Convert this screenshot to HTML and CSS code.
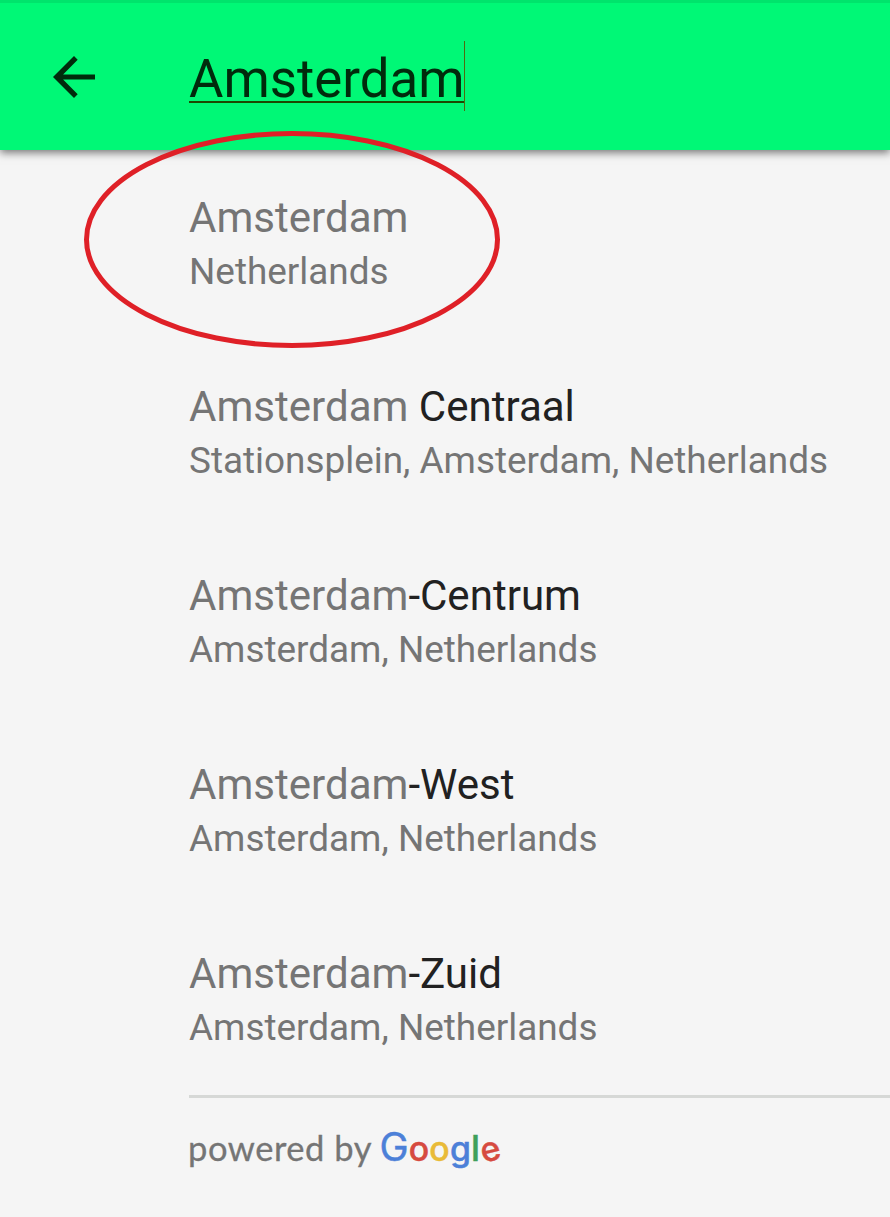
FILE: index.html
```html
<!DOCTYPE html>
<html lang="en">
<head>
<meta charset="utf-8">
<title>Place search</title>
<link rel="stylesheet" href="styles.css">
</head>
<body>
<header class="bar">
  <svg class="back" viewBox="0 0 42 42" width="42" height="42"><path d="M42 18.4H10.1L24.7 3.7L21 0L0 21L21 42L24.7 38.3L10.1 23.6H42Z"/></svg>
  <div class="query"><span class="typed">Amsterdam</span><span class="caret"></span></div>
</header>
<main class="results">
  <div class="place"><div class="name">Amsterdam</div><div class="area">Netherlands</div>
    <svg class="ring" viewBox="0 0 416 217" width="416" height="217"><ellipse cx="208" cy="108.5" rx="205.5" ry="106"/></svg></div>
  <div class="place"><div class="name">Amsterdam <b>Centraal</b></div><div class="area">Stationsplein, Amsterdam, Netherlands</div></div>
  <div class="place"><div class="name">Amsterdam<b>-Centrum</b></div><div class="area">Amsterdam, Netherlands</div></div>
  <div class="place"><div class="name">Amsterdam<b>-West</b></div><div class="area">Amsterdam, Netherlands</div></div>
  <div class="place"><div class="name">Amsterdam<b>-Zuid</b></div><div class="area">Amsterdam, Netherlands</div></div>
</main>
<footer class="credit"><span class="powered">powered by</span><span class="google"><i class="cap blue">G</i><i class="red">o</i><i class="yellow">o</i><i class="blue">g</i><i class="green">l</i><i class="tilt red">e</i></span></footer>
</body>
</html>
```
FILE: styles.css
```css
* { box-sizing: border-box; }
body { margin: 0; height: 1217px; overflow: hidden; background: #f5f5f5; font-family: Roboto, sans-serif; color: #757575; }
.bar { display: flex; align-items: flex-start; height: 150px; background: #00f876; border-top: 3px solid #00e46c; box-shadow: 0 3px 8px rgba(0,0,0,.5); }
.back { margin: 52.5px 94.5px 0 52.5px; fill: #002b0c; flex: none; }
.query { display: flex; margin-top: 38px; height: 71px; }
.typed { width: 275px; height: 62px; padding-top: 8px; font-size: 52.8px; line-height: 61px; color: #002b0c; border-bottom: 2px solid #1c4a00; white-space: nowrap; }
.caret { width: 1px; height: 70px; background: #4e6a10; }
.results { height: 945px; padding-left: 189px; }
.place { position: relative; height: 189px; padding-top: 43px; }
.name { font-size: 42.05px; line-height: 50px; white-space: nowrap; }
.name b { font-weight: 400; color: #212121; }
.area { margin-top: 4px; font-size: 36.9px; line-height: 50px; white-space: nowrap; }
.ring { position: absolute; left: -105px; top: -19px; fill: none; stroke: #df2027; stroke-width: 5; }
.credit { display: flex; align-items: baseline; height: 122px; margin-left: 189px; padding-top: 24px; border-top: 3px solid #d6d8d6; font-family: Lato, sans-serif; line-height: 50px; }
.powered { width: 191.5px; margin-left: -1px; font-size: 34.5px; letter-spacing: .55px; white-space: nowrap; -webkit-text-stroke: .3px currentColor; }
.google { display: flex; align-items: baseline; font-family: Inter, sans-serif; font-size: 33.8px; font-weight: 500; line-height: 50px; letter-spacing: .15px; }
.google i { font-style: normal; -webkit-text-stroke: .5px currentColor; }
.google .cap { font-size: 39px; font-weight: 400; }
.google .green { font-size: 35.5px; }
.google .tilt { transform: rotate(-14deg); }
.blue { color: #4c80d8; }
.red { color: #d64a40; }
.yellow { color: #e9bb38; }
.green { color: #3fa05a; }
```
